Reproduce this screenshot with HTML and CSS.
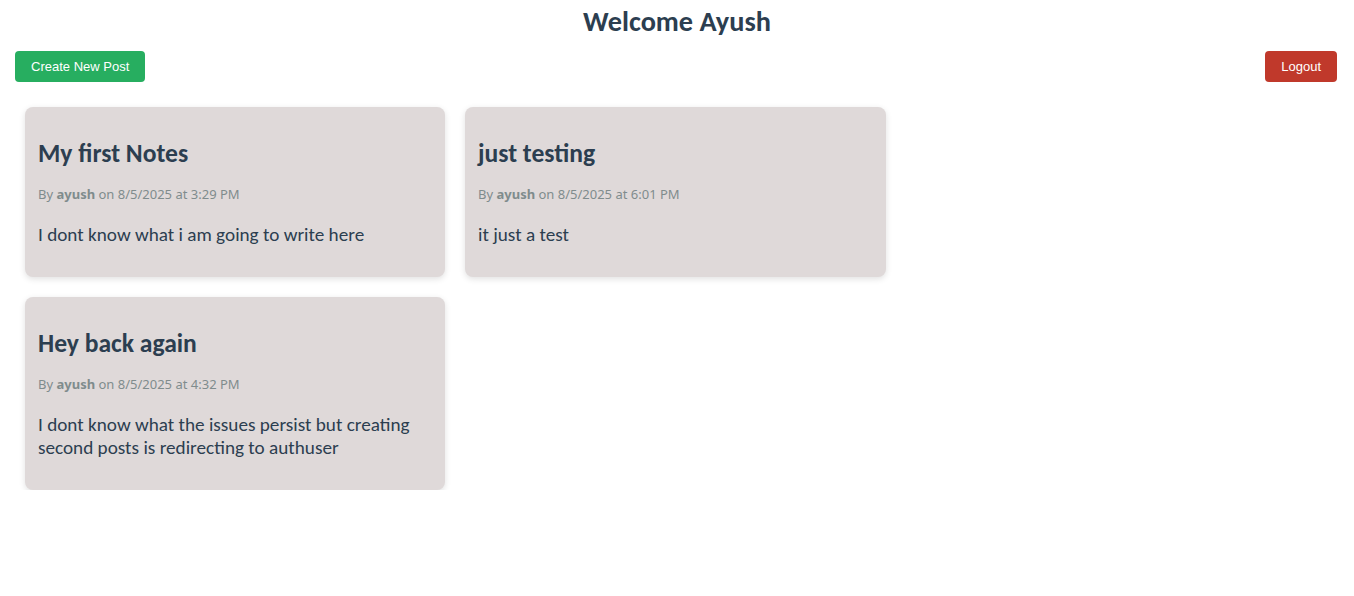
FILE: index.html
```html
<!DOCTYPE html>
<html lang="en">
<head>
<meta charset="utf-8">
<title>Dashboard</title>
<link rel="stylesheet" href="styles.css">
</head>
<body>
  <h1 class="welcome">Welcome Ayush</h1>
  <div class="toolbar">
    <button class="btn btn-create">Create New Post</button>
    <button class="btn btn-logout">Logout</button>
  </div>
  <div class="posts">
    <div class="card">
      <h2 class="card-title">My first Notes</h2>
      <p class="card-meta">By <b>ayush</b> on 8/5/2025 at 3:29 PM</p>
      <p class="card-body">I dont know what i am going to write here</p>
    </div>
    <div class="card">
      <h2 class="card-title">just testing</h2>
      <p class="card-meta">By <b>ayush</b> on 8/5/2025 at 6:01 PM</p>
      <p class="card-body">it just a test</p>
    </div>
    <div class="card">
      <h2 class="card-title">Hey back again</h2>
      <p class="card-meta">By <b>ayush</b> on 8/5/2025 at 4:32 PM</p>
      <p class="card-body">I dont know what the issues persist but creating second posts is redirecting to authuser</p>
    </div>
  </div>
</body>
</html>
```

FILE: styles.css
```css
body {
  margin: 0;
  font-family: Carlito, Lato, "Liberation Sans", sans-serif;
  color: #2c3e50;
  background: #ffffff;
}

.welcome {
  margin: 6px 0 0;
  font-size: 28.3px;
  line-height: 32px;
  text-align: center;
  color: #2c3e50;
  font-weight: 700;
}

.toolbar {
  display: flex;
  justify-content: space-between;
  align-items: center;
  padding: 0 17px 0 15px;
  margin-top: 13px;
}

.btn {
  border: none;
  border-radius: 4px;
  color: #ffffff;
  font-family: "Liberation Sans", Arial, sans-serif;
  font-size: 13px;
  height: 31px;
  padding: 0 16px;
  cursor: pointer;
}

.btn-create { background: #27ae60; }
.btn-logout { background: #c0392b; }

.posts {
  display: grid;
  grid-template-columns: 420px 421px;
  column-gap: 20px;
  row-gap: 20px;
  align-items: start;
  padding: 0 25px;
  margin-top: 25px;
}

.card {
  background: #dfd9d9;
  border-radius: 8px;
  box-shadow: 0 2px 6px rgba(0, 0, 0, 0.12);
  padding: 25px 13px 31px;
}

.card-title {
  margin: 0;
  font-size: 25.6px;
  line-height: 44px;
  font-weight: 700;
  color: #2c3e50;
}

.card-meta {
  margin: 9px 0 0;
  font-family: "Noto Sans", "DejaVu Sans", sans-serif;
  font-size: 13px;
  line-height: 18px;
  color: #7f8c8d;
}

.card-meta b { font-weight: 700; }

.card-body {
  margin: 20px 0 0;
  font-size: 19.2px;
  line-height: 23px;
  color: #2c3e50;
}
```
